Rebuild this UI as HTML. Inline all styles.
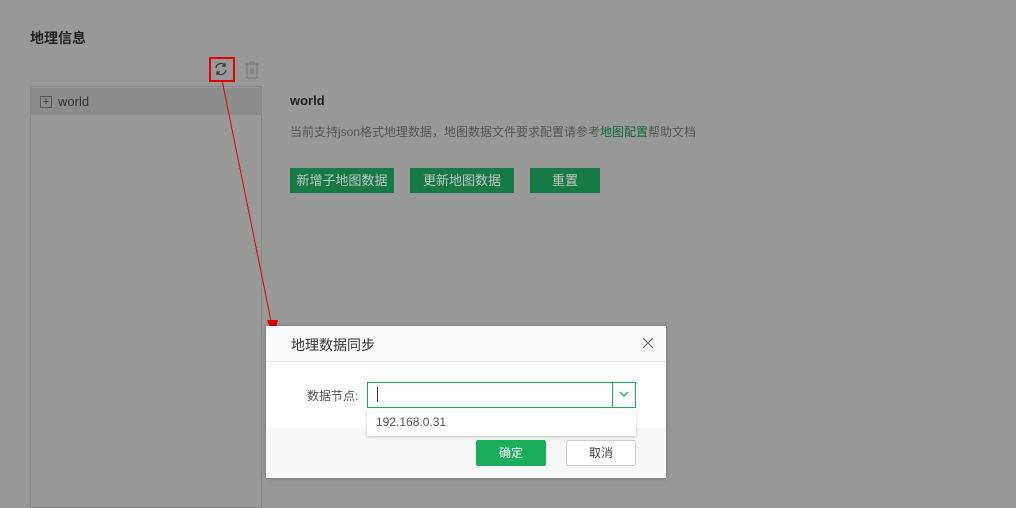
<!DOCTYPE html>
<html><head><meta charset="utf-8"><style>
body{margin:0;width:1016px;height:492px;background:#999;position:relative;overflow:hidden;font-family:"Liberation Sans","Noto Sans CJK SC",sans-serif;}
.a{position:absolute}
.btn{position:absolute;top:168px;height:25px;background:#167a44;color:#c4c4c4;font-size:13px;line-height:25px;text-align:center}
</style></head><body>
<div class="a" style="left:30px;top:28px;font-size:14px;font-weight:bold;color:#222">地理信息</div>
<div class="a" style="left:209px;top:57px;width:22px;height:21px;border:2px solid #e00000"></div>
<svg class="a" style="left:213px;top:61px" width="16" height="16" viewBox="0 0 16 16" fill="none" stroke="#333" stroke-width="1.2"><path d="M3 7a5 5 0 0 1 9-2.5M13 9a5 5 0 0 1-9 2.5"/><path d="M12 2v3h-3M4 14v-3h3"/></svg>
<svg class="a" style="left:244px;top:61px" width="16" height="18" viewBox="0 0 16 18" fill="none" stroke="#7d7d7d" stroke-width="1.2"><path d="M1 3h14M6 3V1h4v2M3 3v14h10V3M7 7v6M9 7v6"/></svg>
<div class="a" style="left:30px;top:86px;width:230px;height:420px;border:1px solid #888"></div>
<div class="a" style="left:31px;top:88px;width:230px;height:27px;background:#8c8c8c"></div>
<div class="a" style="left:40px;top:96px;width:10px;height:10px;border:1px solid #555;font-size:11px;line-height:10px;text-align:center;color:#333">+</div>
<div class="a" style="left:58px;top:94px;font-size:13px;color:#333">world</div>
<div class="a" style="left:290px;top:93px;font-size:13px;font-weight:bold;color:#222">world</div>
<div class="a" style="left:290px;top:123px;font-size:12px;color:#555">当前支持json格式地理数据，地图数据文件要求配置请参考<span style="color:#0d6b3a">地图配置</span>帮助文档</div>
<div class="btn" style="left:290px;width:104px">新增子地图数据</div>
<div class="btn" style="left:410px;width:104px">更新地图数据</div>
<div class="btn" style="left:530px;width:70px">重置</div>
<svg class="a" style="left:0;top:0" width="1016" height="492"><line x1="222" y1="80" x2="272" y2="326" stroke="#e00000" stroke-width="1"/><path d="M274 336 L267 320 L278 320 Z" fill="#e00000"/></svg>
<div class="a" style="left:266px;top:326px;width:400px;height:152px;background:#fff;box-shadow:0 0 4px rgba(0,0,0,.3)">
 <div class="a" style="left:0;top:0;width:400px;height:35px;background:#fafafa;border-bottom:1px solid #e6e6e6"></div>
 <div class="a" style="left:25px;top:9px;font-size:14px;color:#333">地理数据同步</div>
 <svg class="a" style="left:377px;top:12px" width="10" height="10"><path d="M0 0L10 10M10 0L0 10" stroke="#666" stroke-width="1.1"/></svg>
 <div class="a" style="left:0;top:102px;width:400px;height:50px;background:#f7f7f7"></div>
 <div class="a" style="left:41px;top:61px;font-size:12px;color:#555">数据节点:</div>
 <div class="a" style="left:101px;top:56px;width:267px;height:24px;border:1px solid #1aad5c;background:#fff"></div>
 <div class="a" style="left:346px;top:57px;width:1px;height:24px;background:#1aad5c"></div>
 <div class="a" style="left:111px;top:61px;width:1px;height:15px;background:#333"></div>
 <svg class="a" style="left:353px;top:64px" width="10" height="8"><path d="M1 2l4 4 4-4" stroke="#1aad5c" fill="none" stroke-width="1.3"/></svg>
 <div class="a" style="left:101px;top:83px;width:269px;height:27px;background:#fff;box-shadow:0 1px 3px rgba(0,0,0,.2);font-size:12px;color:#555;line-height:27px;text-indent:9px">192.168.0.31</div>
 <div class="a" style="left:210px;top:114px;width:70px;height:26px;background:#1aad5c;color:#fff;font-size:12px;line-height:26px;text-align:center;border-radius:2px">确定</div>
 <div class="a" style="left:300px;top:114px;width:68px;height:24px;border:1px solid #ccc;background:#fff;color:#444;font-size:12px;line-height:24px;text-align:center;border-radius:2px">取消</div>
</div>
</body></html>
